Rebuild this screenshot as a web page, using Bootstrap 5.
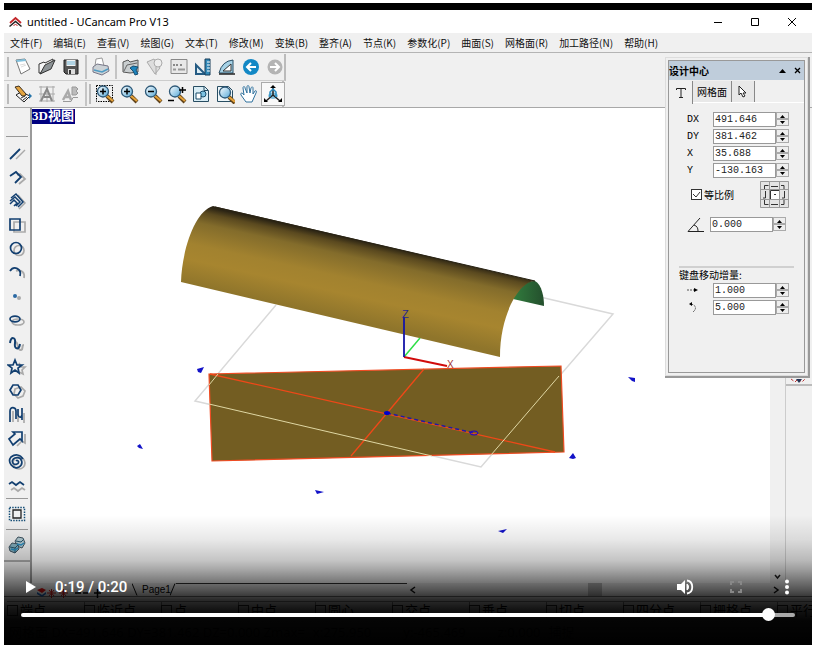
<!DOCTYPE html>
<html lang="zh-CN">
<head>
<meta charset="utf-8">
<meta name="viewport" content="width=device-width, initial-scale=1">
<title>untitled - UCancam Pro V13</title>
<link rel="stylesheet" href="https://cdn.jsdelivr.net/npm/bootstrap@5.3.0/dist/css/bootstrap.min.css">
<style>
body{background:#fff;font-family:"Noto Sans","Noto Sans CJK SC",sans-serif;font-size:11px;line-height:16px;color:#000}
.player{min-height:100vh;padding:3px 2px 0 4px}
.screen{background:#f0f0f0;border-top:7px solid #000}
.title-row{height:23px;background:#fff;font-size:11px;font-family:"Noto Sans",sans-serif;padding-right:2px}
.title-row button{width:37px}
.plain{border:0;background:none;padding:0;color:inherit;line-height:1;display:flex;align-items:center;justify-content:center}
.menu-row{height:20px;gap:11px;padding-left:6px;border-bottom:1px solid #b4b4b4;font-family:"Noto Sans CJK SC",sans-serif;font-size:10px}
.menu-row a{color:#111;text-decoration:none;white-space:nowrap}
.bars{border-bottom:1px solid #a8a8a8;padding-top:1px}
.bar{height:27px;width:282px;border-right:2px solid #bbb;border-bottom:1px solid #ccc;padding-left:3px}
.bar+.bar{height:26px;width:280px;border-bottom:0}
.bar button{width:24px;height:24px;flex:none}
.grip{width:2px;height:20px;background:#bbb;margin-right:2px;flex:none}
.gap-line{width:2px;height:24px;background:#c4c4c4;margin:0 2px;flex:none}
.bar svg,.side svg{width:20px;height:20px}
.bar .on{background:#f8f8f8;border:1px solid #aaa}
.side{width:28px;border-right:2px solid #9a9a9a;padding-top:28px;background:#f0f0f0}
.side hr{margin:0 2px;border-top:1px solid #999;opacity:1}
.side .draws{display:grid;grid-auto-rows:1fr;height:356px;margin-top:5px}
.side .one{height:30px}
.side button{width:26px}
.side .tools{border-bottom:2px solid #aaa}
.view{background:#fff;min-width:0}
.view-tag{background:#000080;color:#fff;font:bold 13px/14px "Liberation Serif","Noto Sans CJK SC",serif;height:15px;padding-right:1px;white-space:nowrap;position:absolute;left:0;top:1px}
.scene{display:block;width:100%}
.scroll{width:15px;padding-bottom:2px}
.dock{width:27px;border-left:1px solid #ccc}
.dock-end{height:278px;border-bottom:2px solid #bbb}
.pages{height:14px;border-bottom:1px solid #777;padding-left:28px}
.pages .lamps{width:100px}
.page-tab{font-size:10px;font-family:"Liberation Sans",sans-serif;width:32px;line-height:13px}
.tab-line{width:231px;border-top:1px solid #333}
.snaps{height:21px;font-size:13px;font-family:"Noto Sans CJK SC",sans-serif;overflow:hidden;padding-left:3px}
.snaps label{width:78px;margin-right:-1px;flex:none;gap:2px;white-space:nowrap;border-top:1px solid #888;border-right:1px solid #888}
.snaps input{appearance:none;width:11px;height:11px;border:1px solid #333;background:#eee;margin:0}
.stat{height:27px;font-size:13px;gap:8px;padding-left:5px;white-space:nowrap;overflow:hidden}
.center-box{right:6px;top:57px;width:143px;height:319px;border:1px solid #ddd;box-shadow:1px 1px 0 1px #999;background:#f0f0f0;padding:2px}
.center-in{border:1px solid #999;height:100%}
.center-head{background:#bfcddb;height:19px;font:bold 10px/16px "Noto Sans CJK SC",sans-serif;padding:0 3px 0 0}
.tabs{height:23px;border-bottom:1px solid #fff;padding-top:1px}
.tabs button{height:21px;font-size:10px;font-family:"Noto Sans CJK SC",sans-serif;border-right:1px solid #888;background:#e8e8e8}
.tabs button.front{background:#f0f0f0;height:23px;width:24px}
.fields{font:10px/14px "Liberation Mono","Noto Sans CJK SC",monospace;padding:8px 10px 0 18px}
.f-row{height:17px}
.f-row label{width:26px;flex:none}
.f-row label.slim{width:23px}
.num{height:15px;width:63px;border:1px solid #999;background:#fff;font:10px/13px "Liberation Mono",monospace;padding:0 1px;color:#222;border-radius:0}
.spin{width:13px;height:15px}
.spin button{height:7px;width:13px;border:1px solid #aaa;background:#eee}
.tick{appearance:none;width:11px;height:11px;border:1px solid #333;background:#fff;margin:0}
.keep{height:27px;margin-top:2px;padding:0 5px 0 4px}
.keep .tick-box{position:relative;width:11px;height:11px}
.keep .tick-box svg{position:absolute;left:0;top:0;pointer-events:none}
.keep label{font:10px/14px "Noto Sans CJK SC",sans-serif;margin-left:2px}
.anchor-grid{width:29px;height:27px}
.step-title{border-top:2px solid #d0d0d0;margin:33px 0 0 -8px;font-family:"Noto Sans CJK SC",sans-serif;font-size:10px;line-height:14px}
.shade{left:4px;right:2px;bottom:0;height:130px;color:#fff;background:linear-gradient(rgba(0,0,0,0) 0%,rgba(0,0,0,.09) 19%,rgba(0,0,0,.23) 35%,rgba(0,0,0,.35) 42%,rgba(0,0,0,.5) 50%,rgba(0,0,0,.66) 58%,rgba(0,0,0,.82) 65%,rgba(0,0,0,.92) 73%,rgba(0,0,0,.98) 81%,#000 100%)}
.controls{height:24px;margin-bottom:9px;padding:0 15px 0 20px}
.controls .right-set{gap:33px}
.clock{font:500 15px/24px Roboto,sans-serif;margin-left:17px}
.seek{appearance:none;display:block;height:14px;margin:0 17px 23px;background:none}
.seek::-webkit-slider-runnable-track{height:4px;border-radius:2px;background:linear-gradient(90deg,#fff 97%,#aaa 97%)}
.seek::-webkit-slider-thumb{appearance:none;width:13px;height:13px;border-radius:50%;background:#fff;margin-top:-5px}
</style>
<script src="https://cdn.jsdelivr.net/npm/bootstrap@5.3.0/dist/js/bootstrap.bundle.min.js"></script>
</head>
<body>
<svg width="0" height="0" class="position-absolute" aria-hidden="true">
<defs>
<linearGradient id="glass" x2="1" y2="1"><stop stop-color="#fff"/><stop offset="1" stop-color="#55a9d8"/></linearGradient>
<symbol id="lens" viewBox="0 0 20 20"><path d="M12 12l6 6" stroke="#5d4019" stroke-width="4"/><path d="M12 12l6 5" stroke="#e4a139" stroke-width="2.2"/><circle cx="8" cy="7.500" r="5.500" fill="url(#glass)" stroke="#2d5877" stroke-width="1.300"/></symbol>
</defs></svg>
<main class="player position-relative d-flex flex-column">
<div class="screen d-flex flex-column flex-grow-1">
<header class="title-row d-flex align-items-center">
<svg class="ms-1 me-1" width="15" height="12" viewBox="0 0 14 12" fill="none"><path d="M1.500 7L7 2l5.500 5" stroke="#c3272b" stroke-width="1.800"/><path d="M1 10.500l6-5 6 5" stroke="#222" stroke-width="1.500"/><path d="M5 10l2-2 2 2" stroke="#c3272b"/></svg>
<span class="flex-grow-1">untitled - UCancam Pro V13</span>
<button class="plain" aria-label="最小化"><svg width="10" height="10"><path d="M1 5.500h8" stroke="#000"/></svg></button>
<button class="plain" aria-label="最大化"><svg width="10" height="10"><path d="M1.500 1.500h7v7h-7z" stroke="#000" fill="none"/></svg></button>
<button class="plain" aria-label="关闭"><svg width="10" height="10"><path d="M1 1l8 8M9 1L1 9" stroke="#000"/></svg></button>
</header>
<nav class="menu-row d-flex align-items-center"><a href="#">文件(F)</a><a href="#">编辑(E)</a><a href="#">查看(V)</a><a href="#">绘图(G)</a><a href="#">文本(T)</a><a href="#">修改(M)</a><a href="#">变换(B)</a><a href="#">整齐(A)</a><a href="#">节点(K)</a><a href="#">参数化(P)</a><a href="#">曲面(S)</a><a href="#">网格面(R)</a><a href="#">加工路径(N)</a><a href="#">帮助(H)</a></nav>
<div class="bars">
<div class="bar d-flex align-items-center"><i class="grip"></i>
<button class="plain" aria-label="新建"><svg viewBox="0 0 20 20"><path d="M3 3l9-1 5 10-9 5z" fill="#fff" stroke="#777"/><path d="M3 3l9-1 1 2-9 1z" fill="#7fc0dd"/><path d="M7 8l5-1M8 10l5-2" stroke="#ddd"/></svg></button>
<button class="plain" aria-label="打开"><svg viewBox="0 0 20 20"><path d="M2 16V7l5-2 1 1 8-4v4L5 16z" fill="#f6f6f6" stroke="#333"/><path d="M3 17L8 8l10-5-4 9z" fill="#8d9396" stroke="#333"/></svg></button>
<button class="plain" aria-label="保存"><svg viewBox="0 0 20 20"><path d="M3 3h14v14H5l-2-2z" fill="#555" stroke="#222"/><path d="M5.500 3h9v6h-9z" fill="#f3f3f3"/><path d="M6 5h8M6 7h8" stroke="#6eb3d4"/><path d="M7 12h7v5H7z" fill="#ddd"/><path d="M8 13h2v4H8z" fill="#333"/></svg></button>
<i class="gap-line"></i>
<button class="plain" aria-label="打印"><svg viewBox="0 0 20 20"><path d="M4 9l1-7 6-1 2 8z" fill="#fff" stroke="#999"/><path d="M2 10l4-3 11 2 1 5-7 4-9-3z" fill="#ccd2d6" stroke="#778"/><path d="M3 13l8 2 6-3" stroke="#4d9cc5" stroke-width="1.500" fill="none"/></svg></button>
<i class="gap-line"></i>
<button class="plain" aria-label="导入"><svg viewBox="0 0 20 20"><path d="M2 15V5l5-2 2 2 8-2v12l-8 1z" fill="#c9ced0" stroke="#555"/><path d="M3 14l3-6 10-2" stroke="#666" fill="none"/><path d="M9 11l3-2 5 1-2 3 2 4-3 1-2-4z" fill="#1d84bd" stroke="#164d70"/></svg></button>
<button class="plain" aria-label="选择"><svg viewBox="0 0 20 20" fill="#ddd" stroke="#aaa"><path d="M2 5l7-3 6 9-5 6z"/><circle cx="13" cy="6" r="4" fill="#eee"/><path d="M11 10v8"/></svg></button>
<button class="plain" aria-label="属性"><svg viewBox="0 0 20 20"><path d="M2 2.500h16v14H2z" fill="#e8e8e8" stroke="#888"/><path d="M4 8h6M11 8h3" stroke="#888" stroke-width="2" stroke-dasharray="2 1"/><path d="M4 12.500h3M9 12.500h7" stroke="#999" stroke-width="2"/></svg></button>
<button class="plain" aria-label="标尺"><svg viewBox="0 0 20 20"><path d="M3 8v9h9z" fill="#ddeef6" stroke="#255b83" stroke-width="2"/><path d="M12 2h5v16h-5z" fill="#338ab9" stroke="#183c58"/><path d="M14 5h3M14 8h3M14 11h3M14 14h3" stroke="#fff"/></svg></button>
<button class="plain" aria-label="量角"><svg viewBox="0 0 20 20"><path d="M2 16Q5 4 16 3v13z" fill="#a6d2e6" stroke="#294e66"/><path d="M6 14l8-7v7z" fill="#fff" stroke="#333"/><path d="M2 17h16" stroke="#222" stroke-width="1.500"/></svg></button>
<button class="plain" aria-label="后退"><svg viewBox="0 0 20 20"><circle cx="10" cy="10" r="8" fill="#1388c5"/><path d="M15 10H6M10 6l-4 4 4 4" stroke="#fff" stroke-width="2" fill="none"/></svg></button>
<button class="plain" aria-label="前进"><svg viewBox="0 0 20 20"><circle cx="10" cy="10" r="7.500" fill="#b4b4b4"/><path d="M5 10h9M10 6l4 4-4 4" stroke="#fff" stroke-width="2" fill="none"/></svg></button>
</div>
<div class="bar d-flex align-items-center"><i class="grip"></i>
<button class="plain" aria-label="编辑"><svg viewBox="0 0 20 20"><path d="M3 11l5-3 9 4-6 6z" fill="#f5f5f5" stroke="#222"/><path d="M2 3l4-1 7 8-1 2-3 0z" fill="#e3a440" stroke="#3d3020"/><path d="M8 14l4-2M10 16l4-3" stroke="#333"/><path d="M16 9l3 3-3 3z" fill="#2574a9"/></svg></button>
<button class="plain" aria-label="文字网格"><svg viewBox="0 0 20 20" fill="none" stroke="#aaa"><path d="M2 3h16M2 10h16M2 17h16M4 2v16M10 2v16M16 2v16"/><path d="M4 17l6-12 5 12M7 13h6" stroke="#888" stroke-width="2"/></svg></button>
<button class="plain" aria-label="文字变换"><svg viewBox="0 0 20 20" fill="none" stroke="#aaa"><path d="M2 16l5-9 3 9M4 13h5" stroke-width="2.500"/><path d="M11 3h4l2 2-2 2 2 2-2 2h-4z" fill="#bbb" stroke="#999"/><path d="M2 17.500h8l2-4h5" stroke="#999"/></svg></button>
<i class="gap-line"></i><i class="grip"></i>
<button class="plain" aria-label="窗口缩放"><svg viewBox="0 0 20 20"><path d="M1.500 1.500h16v16h-16z" stroke="#000" stroke-dasharray="1.500 1" fill="none"/><use href="#lens"/><path d="M5 7.500h6M8 4.500v6" stroke="#000" stroke-width="1.500"/></svg></button>
<button class="plain" aria-label="放大"><svg viewBox="0 0 20 20"><use href="#lens"/><path d="M5 7.500h6M8 4.500v6" stroke="#000" stroke-width="1.500"/></svg></button>
<button class="plain" aria-label="缩小"><svg viewBox="0 0 20 20"><use href="#lens"/><path d="M5 7.500h6" stroke="#000" stroke-width="1.500"/></svg></button>
<button class="plain" aria-label="动态缩放"><svg viewBox="0 0 20 20"><use href="#lens"/><path d="M12 6h7M15.500 3v6M1 16.500h6" stroke="#000" stroke-width="1.500"/></svg></button>
<button class="plain" aria-label="全部图形"><svg viewBox="0 0 20 20"><path d="M2.500 2.500h11l4 4v11h-15z" fill="#d9edf5" stroke="#284d62"/><path d="M13 2.500v4h4" fill="none" stroke="#284d62"/><circle cx="12" cy="10" r="3" fill="#7bc2e2" stroke="#174a69"/><path d="M5 9h5v6H5z" fill="#fff" stroke="#174a69"/></svg></button>
<button class="plain" aria-label="全页"><svg viewBox="0 0 20 20"><path d="M2.500 2.500h11l4 4v11h-15z" fill="#eef6f9" stroke="#284d62"/><use href="#lens" x="2" y="1"/></svg></button>
<button class="plain" aria-label="平移"><svg viewBox="0 0 20 20"><path d="M7 18L2 11c-1-2 1-3 3 0L4 4c0-2 2-2 2 0l2 5V3c0-2 2-2 2 0l1 6 1-5c1-2 2-1 2 0v6l2-3c1-1 2 0 1 2l-4 9z" fill="#fff" stroke="#2f719d"/></svg></button>
<button class="plain on" aria-label="三维视图"><svg viewBox="0 0 20 20"><path d="M5 12c2-5 8-5 10 0-2 4-8 4-10 0z" fill="#84c1de"/><path d="M10 3v8l-7 6M10 11l7 6" stroke="#222" stroke-width="1.500" fill="none"/><path d="M7 4l3-3 3 3zM1 18v-4l4 4zM19 18v-4l-4 4z"/><path d="M7 13V8l3-3 3 3v5" fill="none" stroke="#278bc0" stroke-width="1.500"/></svg></button>
</div></div>
<div class="d-flex flex-grow-1">
<aside class="side"><div class="tools"><hr>
<div class="draws">
<button class="plain" aria-label="直线"><svg viewBox="0 0 20 20"><path d="M9 15l9-9" stroke="#aaa" stroke-width="1.500"/><path d="M3 15l10-10" stroke="#123f70" stroke-width="1.800"/></svg></button>
<button class="plain" aria-label="折线"><svg viewBox="0 0 20 20" fill="none" stroke-width="1.800"><path d="M10 7l3-1 5 5-6 5" stroke="#aaa"/><path d="M3 8l6-4 5 5-6 6" stroke="#123f70"/></svg></button>
<button class="plain" aria-label="平行线"><svg viewBox="0 0 20 20" fill="none" stroke-width="1.500"><path d="M12 18l6-6-7-8" stroke="#aaa"/><path d="M4 7l5-4 7 8-5 5M3 10l5-4 5 5-4 4M3 13l4-4 3 3-3 3" stroke="#123f70"/></svg></button>
<button class="plain" aria-label="矩形"><svg viewBox="0 0 20 20" fill="none" stroke-width="1.700"><path d="M7 7h11v10H7z" stroke="#aaa"/><path d="M3 4h10v11H3z" stroke="#123f70"/></svg></button>
<button class="plain" aria-label="圆"><svg viewBox="0 0 20 20" fill="none" stroke-width="1.700"><circle cx="12" cy="11.500" r="5" stroke="#aaa"/><circle cx="9" cy="9" r="5.500" stroke="#123f70"/></svg></button>
<button class="plain" aria-label="圆弧"><svg viewBox="0 0 20 20" fill="none" stroke-width="1.800"><path d="M9 8c6-2 9 2 8 7" stroke="#aaa"/><path d="M3 8c4-6 12-2 10 5" stroke="#123f70"/></svg></button>
<button class="plain" aria-label="点"><svg viewBox="0 0 20 20"><circle cx="12" cy="12" r="2" fill="#aaa"/><circle cx="8" cy="10" r="2" fill="#2b69a3"/></svg></button>
<button class="plain" aria-label="椭圆"><svg viewBox="0 0 20 20" fill="none" stroke-width="1.700"><ellipse cx="11" cy="12" rx="6" ry="3" stroke="#aaa"/><ellipse cx="8" cy="9" rx="5" ry="2.800" stroke="#123f70"/></svg></button>
<button class="plain" aria-label="曲线"><svg viewBox="0 0 20 20" fill="none" stroke-width="2"><path d="M8 9c3-4 2 8 6 7 3-1 0-5 3-5" stroke="#aaa"/><path d="M3 9c1-7 6-6 5 0s4 8 5 1" stroke="#123f70"/></svg></button>
<button class="plain" aria-label="星形"><svg viewBox="0 0 20 20" fill="none" stroke-width="1.700"><path d="M12 6l2 4h4l-3 3 1 4-4-2" stroke="#aaa"/><path d="M8 3l2 5h5l-4 3 1 5-4-3-4 3 1-5-4-3h5z" stroke="#123f70"/></svg></button>
<button class="plain" aria-label="多边形"><svg viewBox="0 0 20 20" fill="none" stroke-width="1.700"><path d="M8 8l6-2 4 4-2 5-5 2-4-4z" stroke="#aaa"/><path d="M3 9l3-5h5l3 5-3 5H6z" stroke="#123f70"/></svg></button>
<button class="plain" aria-label="手绘"><svg viewBox="0 0 20 20" fill="none" stroke-width="1.700"><path d="M6 17V6M11 9v8M17 8v10" stroke="#aaa"/><path d="M3 17V6c0-5 6-4 6 0v8M11 4v6c1 3 3 3 4 0V3v12" stroke="#123f70"/></svg></button>
<button class="plain" aria-label="箭头"><svg viewBox="0 0 20 20" fill="none" stroke-width="1.700"><path d="M10 17l5-5 3 2V5" stroke="#aaa"/><path d="M2 10l6-5-2-2h9v9l-2-2-7 6z" stroke="#123f70"/></svg></button>
<button class="plain" aria-label="螺旋"><svg viewBox="0 0 20 20" fill="none" stroke-width="1.700"><circle cx="12" cy="11" r="6" stroke="#aaa"/><path d="M9 9c2-2 4 2 1 3-4 2-7-4-2-6 7-2 9 6 4 9-6 3-12-5-8-10 4-3 9-3 12 2" stroke="#123f70"/></svg></button>
<button class="plain" aria-label="波浪"><svg viewBox="0 0 20 20" fill="none" stroke-width="1.800"><path d="M4 14l3-2 4 3 4-3 3 2" stroke="#aaa"/><path d="M2 8l3-2 4 3 4-3 4 3" stroke="#123f70"/></svg></button>
</div><hr>
<button class="plain one" aria-label="选框"><svg viewBox="0 0 20 20" fill="none"><path d="M2.500 3.500h15v13h-15z" stroke="#164f78" stroke-dasharray="1.500 1.200" stroke-width="1.500"/><path d="M6 6h8v8H6z" stroke="#222" stroke-width="1.300"/></svg></button><hr>
<button class="plain one" aria-label="立体"><svg viewBox="0 0 20 20" stroke="#3e5360"><path d="M8 6l3-4 5 1 2 5-3 5-5-2z" fill="#b3cbd3"/><path d="M2 12l3-4 6 1 1 5-4 4-5-2z" fill="#82aebd"/><path d="M3 12l5 1 3-3M8 13v5M9 6l5 1 3-3" fill="none" stroke="#24566c"/><path d="M4 14l4 1 3-2M10 9l4 1 3-2" fill="none" stroke="#278cc0" stroke-width="1.500"/></svg></button>
</div></aside>
<section class="view flex-grow-1 position-relative" aria-label="3D视图"><span class="view-tag">3D视图</span>
<svg class="scene" viewBox="32 108 738 474" preserveAspectRatio="xMinYMin meet">
<defs><linearGradient id="tube" gradientUnits="userSpaceOnUse" x1="366" y1="242" x2="349" y2="319"><stop stop-color="#2b2414"/><stop offset=".08" stop-color="#5a491f"/><stop offset=".22" stop-color="#836c2b"/><stop offset=".5" stop-color="#a2822f"/><stop offset=".7" stop-color="#a7852f"/><stop offset="1" stop-color="#8f752b"/></linearGradient>
<linearGradient id="inside" x2="1"><stop stop-color="#317c3d"/><stop offset="1" stop-color="#244f2d"/></linearGradient></defs>
<path d="M276 305L195 401 481 467 613 314 540 297" fill="none" stroke="#d9d9d9" stroke-width="1.500"/>
<path d="M513 299C518 286 528 280 535 281 542 285 544 297 544 306z" fill="url(#inside)"/>
<path d="M181 282C182 250 195 211 213 206L535 281C520 281 500 313 500 357z" fill="url(#tube)"/>
<path d="M215 207L535 281" stroke="#292314"/>
<path d="M209 374L561 366 564 452 212 461z" fill="#735d22" stroke="#ef4b22" stroke-width="1.200"/>
<path d="M210 374L555 452M424 369L351 456" stroke="#ef4818" stroke-width="1.300"/>
<path d="M218 374L209 385M209 404L432 456M559 376L491 455" stroke="#dfd7a4"/>
<path d="M387 413L474 433" stroke="#221aa5" stroke-width="1.500" stroke-dasharray="4 3"/>
<ellipse cx="387" cy="413" rx="3" ry="2" fill="#00c"/><ellipse cx="474" cy="433" rx="4" ry="2" fill="none" stroke="#20c"/>
<path d="M404 357L420 338" stroke="#2dde45" stroke-width="1.500"/><path d="M404 357L447 366" stroke="#d10b0b" stroke-width="1.800"/><path d="M404 357V317" stroke="#1515a8" stroke-width="1.800"/>
<text x="402" y="318" font-family="Liberation Sans" font-size="11" fill="#28288a">Z</text><text x="447" y="368" font-family="Liberation Sans" font-size="10" fill="#a23434">X</text>
<path d="M197 369l7-2-3 6-3-1zM628 377l7 1v4l-3-1zM137 446l3-2 3 5-4-1zM315 490l9 2-7 2zM569 458l4-5 3 5-3 1zM498 531l9-2-4 4z" fill="#1313c8"/>
</svg></section>
<div class="scroll d-flex flex-column align-items-center justify-content-end"><svg width="9" height="8"><path d="M2 2l2.500 3L7 2" fill="none" stroke="#222" stroke-width="1.500"/></svg></div>
<div class="dock"><div class="dock-end d-flex align-items-end justify-content-center"><svg width="18" height="7"><path d="M1 2l4 3 3-3 4 3 4-4" fill="none" stroke="#b33" stroke-dasharray="3 2"/><path d="M6 2h6l-3 4z" fill="#235"/></svg></div></div>
</div>
<div class="pages d-flex align-items-stretch"><div class="lamps"><svg width="100" height="13"><path d="M5 4l5-2 4 2-4 3z" fill="#d11"/><path d="M5 6l5 3 4-3v2l-4 3-5-3z" fill="#26b"/><g stroke="#c22"><path d="M15 7h9M19.500 3v9M17 4l5 6M22 4l-5 6M27 7h9M31.500 3v9M29 4l5 6M34 4l-5 6"/></g><path d="M43 7h6M51 7h5M62 7h7M65.500 3v9" stroke="#000" stroke-width="1.500"/></svg></div>
<svg width="6" height="13"><path d="M0 .5l5 12" stroke="#111"/></svg><span class="page-tab ps-1">Page1</span><svg width="6" height="13"><path d="M0 12.500l5-12" stroke="#111"/></svg><div class="tab-line"></div>
<svg class="flex-grow-1" height="13"><path d="M8 4L4 7l4 3" stroke="#111" fill="none" stroke-width="1.500"/><path d="M181 0h14v13h-14z" fill="#bbb"/><path d="M367 4l4 3-4 3" stroke="#111" fill="none" stroke-width="1.500"/></svg></div>
<div class="snaps d-flex align-items-start pt-1">
<label class="d-flex align-items-center"><input type="checkbox">端点</label><label class="d-flex align-items-center"><input type="checkbox">临近点</label><label class="d-flex align-items-center"><input type="checkbox">点</label><label class="d-flex align-items-center"><input type="checkbox">中点</label><label class="d-flex align-items-center"><input type="checkbox">圆心</label><label class="d-flex align-items-center"><input type="checkbox">交点</label><label class="d-flex align-items-center"><input type="checkbox">垂点</label><label class="d-flex align-items-center"><input type="checkbox">切点</label><label class="d-flex align-items-center"><input type="checkbox">四分点</label><label class="d-flex align-items-center"><input type="checkbox">栅格点</label><label class="d-flex align-items-center"><input type="checkbox">平行</label>
</div>
<div class="stat d-flex align-items-center"><span>网格面 DX=491.646 DY=381.462 DZ=0.000 Zmax=</span><span class="pe-4">x:275.950</span><span class="pe-4">y:-465.469</span><span>z:0.000</span><span>捕捉</span></div>
</div>

<section class="center-box position-absolute" aria-label="设计中心"><div class="center-in">
<div class="center-head d-flex align-items-center"><span class="flex-grow-1">设计中心</span><button class="plain me-2" aria-label="折叠"><svg width="7" height="5"><path d="M0 5l3.500-4L7 5z"/></svg></button><button class="plain" aria-label="关闭面板"><svg width="7" height="7"><path d="M1 1l5 5M6 1L1 6" stroke="#000" stroke-width="1.300"/></svg></button></div>
<div class="tabs d-flex"><button class="plain front" aria-label="变换"><svg width="12" height="13" fill="none" stroke="#222"><path d="M1.500 4V2.500h9V4M6 2v10M4 11.500h4"/></svg></button><button class="plain px-1">网格面</button><button class="plain px-1" aria-label="选取"><svg width="14" height="13"><path d="M3 1v9l2-2 2 4 2-1-2-3h3z" fill="#fff" stroke="#222"/></svg></button></div>
<div class="fields">
<div class="f-row d-flex align-items-center"><label for="dx">DX</label><input class="num" id="dx" value="491.646"><span class="spin"><button class="plain" aria-label="DX 加"><svg width="7" height="4"><path d="M1 4h5L3.500 1z"/></svg></button><button class="plain" aria-label="DX 减"><svg width="7" height="4"><path d="M1 0h5L3.500 3z"/></svg></button></span></div>
<div class="f-row d-flex align-items-center"><label for="dy">DY</label><input class="num" id="dy" value="381.462"><span class="spin"><button class="plain" aria-label="DY 加"><svg width="7" height="4"><path d="M1 4h5L3.500 1z"/></svg></button><button class="plain" aria-label="DY 减"><svg width="7" height="4"><path d="M1 0h5L3.500 3z"/></svg></button></span></div>
<div class="f-row d-flex align-items-center"><label for="px">X</label><input class="num" id="px" value="35.688"><span class="spin"><button class="plain" aria-label="X 加"><svg width="7" height="4"><path d="M1 4h5L3.500 1z"/></svg></button><button class="plain" aria-label="X 减"><svg width="7" height="4"><path d="M1 0h5L3.500 3z"/></svg></button></span></div>
<div class="f-row d-flex align-items-center"><label for="py">Y</label><input class="num" id="py" value="-130.163"><span class="spin"><button class="plain" aria-label="Y 加"><svg width="7" height="4"><path d="M1 4h5L3.500 1z"/></svg></button><button class="plain" aria-label="Y 减"><svg width="7" height="4"><path d="M1 0h5L3.500 3z"/></svg></button></span></div>
<div class="keep d-flex align-items-center"><span class="tick-box d-flex"><input class="tick" type="checkbox" id="ratio" checked><svg width="11" height="11"><path d="M2 5l3 3 4-5" fill="none" stroke="#333"/></svg></span><label for="ratio" class="flex-grow-1">等比例</label>
<svg class="anchor-grid" viewBox="0 0 29 27"><path d="M0 0h29v27H0z" fill="#e4e4e4"/><path d="M.5.500h28v26H.5zM9.500 0v27M19.500 0v27M0 8.500h29M0 18.500h29" fill="none" stroke="#999"/><path d="M10 9h9v9h-9z" fill="#fff"/><path d="M4.500 8V4.500h4M11 5.500h7M21 4.500h3V8M5.500 10v7H3M10.500 18V9.500H19M24.500 10v7H22M4.500 19v4.500h4M11 23.500h7M21 23.500h3V19M14 13.500h2" fill="none" stroke="#333"/></svg></div>
<div class="f-row d-flex align-items-center mt-2"><label class="slim" for="angle"><svg width="18" height="16" fill="none" stroke="#222"><path d="M13 1L1 14.500h16M7 8c3 1 4 3 4 6"/></svg></label><input class="num" id="angle" value="0.000"><span class="spin"><button class="plain" aria-label="角度 加"><svg width="7" height="4"><path d="M1 4h5L3.500 1z"/></svg></button><button class="plain" aria-label="角度 减"><svg width="7" height="4"><path d="M1 0h5L3.500 3z"/></svg></button></span></div>
<div class="step-title">键盘移动增量:</div>
<div class="f-row d-flex align-items-center"><label for="mv"><svg width="12" height="8"><path d="M0 4h8" stroke="#555" stroke-dasharray="2 1"/><path d="M7 2l4 2-4 2z"/></svg></label><input class="num" id="mv" value="1.000"><span class="spin"><button class="plain" aria-label="移动 加"><svg width="7" height="4"><path d="M1 4h5L3.500 1z"/></svg></button><button class="plain" aria-label="移动 减"><svg width="7" height="4"><path d="M1 0h5L3.500 3z"/></svg></button></span></div>
<div class="f-row d-flex align-items-center"><label for="rt"><svg width="12" height="12"><path d="M4 3c5 1 6 5 2 8" fill="none" stroke="#555" stroke-dasharray="2 1"/><path d="M2 3l3-2v4z"/></svg></label><input class="num" id="rt" value="5.000"><span class="spin"><button class="plain" aria-label="旋转 加"><svg width="7" height="4"><path d="M1 4h5L3.500 1z"/></svg></button><button class="plain" aria-label="旋转 减"><svg width="7" height="4"><path d="M1 0h5L3.500 3z"/></svg></button></span></div>
</div></div></section>

<div class="shade position-absolute d-flex flex-column justify-content-end">
<div class="controls d-flex align-items-center"><button class="plain" aria-label="播放"><svg width="14" height="14"><path d="M2 1l10 6-10 6z" fill="#fff"/></svg></button><span class="clock flex-grow-1">0:19 / 0:20</span>
<div class="right-set d-flex align-items-center">
<button class="plain" aria-label="静音"><svg width="20" height="18" viewBox="0 0 20 18"><path d="M2 6v6h4l4 4V2L6 6z" fill="#fff"/><path d="M12 6c2 1 2 5 0 6z" fill="#fff" stroke="#fff"/><path d="M12 2.500c7 1 7 12 0 13" fill="none" stroke="#fff" stroke-width="1.800"/></svg></button>
<button class="plain" aria-label="全屏"><svg width="16" height="16"><path d="M3 6V3h3M10 3h3v3M13 10v3h-3M6 13H3v-3" fill="none" stroke="#888" stroke-width="2"/></svg></button>
<button class="plain" aria-label="更多"><svg width="20" height="18"><circle cx="10" cy="3.500" r="2" fill="#fff"/><circle cx="10" cy="9" r="2" fill="#fff"/><circle cx="10" cy="14.500" r="2" fill="#fff"/></svg></button></div></div>
<input class="seek" type="range" min="0" max="1000" value="974" aria-label="播放进度">
</div>
</main>
</body>
</html>
